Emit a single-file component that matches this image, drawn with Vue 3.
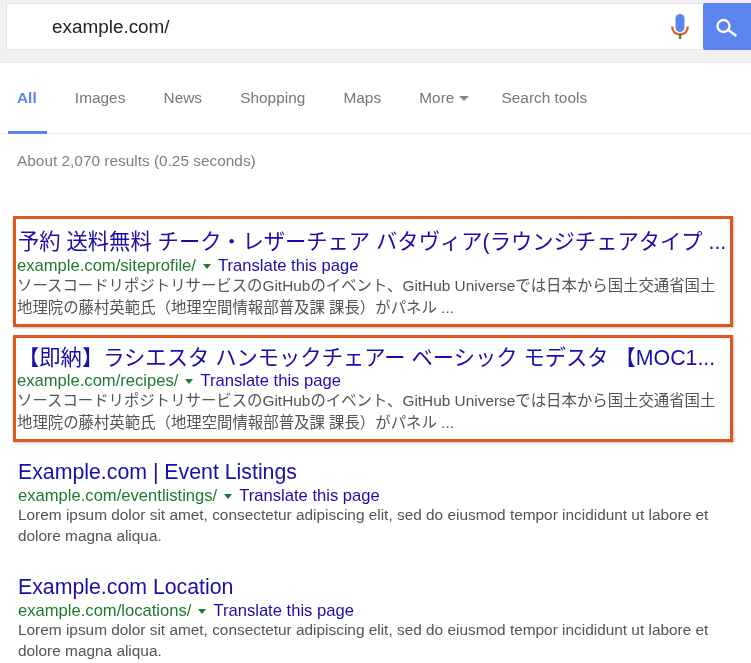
<template>
  <div class="page">
    <header class="top">
      <div class="search">
        <div class="query">example.com/</div>
        <svg class="mic" width="18" height="25" viewBox="0 0 18 25">
          <rect x="4.5" y="0" width="9" height="18" rx="4.5" fill="#5c86ea"/>
          <path d="M1.2 12.5c0 5 3.4 7.8 7.8 7.8s7.8-2.8 7.8-7.8" fill="none" stroke="#d9682f" stroke-width="2.4"/>
          <rect x="7.9" y="20" width="2.4" height="5" fill="#3b8a4a"/>
        </svg>
        <button class="btn" aria-label="Search">
          <svg width="24" height="24" viewBox="0 0 24 24">
            <circle cx="8.5" cy="11" r="6" fill="none" stroke="#fff" stroke-width="2.3"/>
            <path d="M13.2 15L21.5 21" stroke="#fff" stroke-width="2.2"/>
          </svg>
        </button>
      </div>
    </header>
    <nav class="tabs">
      <a v-for="t in tabs" :key="t.name" class="tab" :class="{ active: t.active, last: t.last }">
        {{ t.name }}<i v-if="t.caret" class="caret"></i>
      </a>
    </nav>
    <div class="stats">About 2,070 results (0.25 seconds)</div>
    <main class="results">
      <section v-for="r in results" :key="r.url" class="result" :class="{ boxed: r.boxed }">
        <h3 class="title">{{ r.title }}</h3>
        <div class="url"><span class="green">{{ r.url }}</span><i class="arrow"></i><span class="tr">Translate this page</span></div>
        <p class="desc">{{ r.l1 }}<br>{{ r.l2 }}</p>
      </section>
    </main>
  </div>
</template>

<script setup>
const tabs = [
  { name: 'All', active: true },
  { name: 'Images' },
  { name: 'News' },
  { name: 'Shopping' },
  { name: 'Maps' },
  { name: 'More', caret: true },
  { name: 'Search tools', last: true }
]
const ja1 = 'ソースコードリポジトリサービスのGitHubのイベント、GitHub Universeでは日本から国土交通省国土'
const ja2 = '地理院の藤村英範氏（地理空間情報部普及課 課長）がパネル ...'
const lo1 = 'Lorem ipsum dolor sit amet, consectetur adipiscing elit, sed do eiusmod tempor incididunt ut labore et'
const lo2 = 'dolore magna aliqua.'
const results = [
  { boxed: true, title: '予約 送料無料 チーク・レザーチェア バタヴィア(ラウンジチェアタイプ ...', url: 'example.com/siteprofile/', l1: ja1, l2: ja2 },
  { boxed: true, title: '【即納】ラシエスタ ハンモックチェアー ベーシック モデスタ 【MOC1...', url: 'example.com/recipes/', l1: ja1, l2: ja2 },
  { title: 'Example.com | Event Listings', url: 'example.com/eventlistings/', l1: lo1, l2: lo2 },
  { title: 'Example.com Location', url: 'example.com/locations/', l1: lo1, l2: lo2 }
]
</script>

<style>
html, body { margin: 0; background: #fff; overflow: hidden; }
</style>

<style scoped>
.page {
  width: 751px;
  height: 663px;
  overflow: hidden;
  font-family: "Liberation Sans", "Noto Sans CJK JP", sans-serif;
  background: #fff;
  filter: blur(0.45px);
}
.top {
  box-sizing: border-box;
  height: 63px;
  padding: 3px 0 13px 6px;
  background: #f1f1f1;
  border-bottom: 1px solid #e8e8e8;
}
.search {
  display: flex;
  align-items: center;
  height: 47px;
  background: #fff;
  border: 1px solid #e2e2e2;
  border-right: 0;
  box-sizing: border-box;
}
.query {
  flex: 1;
  padding-left: 45px;
  font-size: 18.9px;
  color: #222;
}
.mic { margin-right: 14px; }
.btn {
  width: 48px;
  height: 47px;
  margin: 0;
  padding: 0;
  border: 0;
  border-radius: 2px 0 0 2px;
  background: #5c83ee;
  display: flex;
  align-items: center;
  justify-content: center;
}
.tabs {
  display: flex;
  gap: 38.2px;
  box-sizing: border-box;
  height: 71px;
  padding-left: 8px;
  border-bottom: 1px solid #ebebeb;
}
.tab {
  box-sizing: border-box;
  padding-top: 26px;
  font-size: 15.4px;
  line-height: 17px;
  color: #777;
  white-space: nowrap;
}
.tab.active {
  height: 71px;
  padding: 26px 10px 0 9px;
  margin-right: -10px;
  color: #5c83ee;
  font-weight: bold;
  border-bottom: 3px solid #5c83ee;
}
.tab.last { margin-left: -6px; }
.caret {
  display: inline-block;
  margin-left: 5px;
  vertical-align: middle;
  border: 5px solid transparent;
  border-top: 5px solid #888;
  border-bottom: 0;
}
.stats {
  padding: 18px 0 0 17px;
  font-size: 15.4px;
  line-height: 17px;
  color: #808080;
}
.results { padding-top: 47px; }
.result {
  box-sizing: border-box;
  padding: 1px 0 0 18px;
  height: 115px;
}
.result.boxed {
  width: 720px;
  margin-left: 13px;
  height: 111px;
  padding: 10px 0 0 1px;
  border: 3px solid #e0581f;
  margin-bottom: 8px;
  box-shadow: 1px 1px 2px rgba(0, 0, 0, 0.25);
}
.result.boxed + .result.boxed { height: 107px; margin-bottom: 16px; padding-top: 7px; }
.result.boxed + .result.boxed .title { line-height: 26px; }
.result.boxed .title { margin-left: 1px; }
.title {
  margin: 0;
  font-size: 21.3px;
  line-height: 27px;
  font-weight: normal;
  color: #1a0dab;
  white-space: nowrap;
}
.url {
  font-size: 16.6px;
  line-height: 19px;
  display: flex;
  align-items: center;
}
.green { color: #1e7a2e; }
.arrow {
  margin: 2px 7px 0 7px;
  border: 4px solid transparent;
  border-top: 5px solid #1e7a2e;
  border-bottom: 0;
}
.tr { color: #1a0dab; }
.desc {
  margin: -1px 0 0;
  font-size: 15.4px;
  line-height: 21px;
  color: #545454;
  white-space: nowrap;
}
.boxed .desc {
  margin-top: 0;
  line-height: 21.5px;
}
</style>
